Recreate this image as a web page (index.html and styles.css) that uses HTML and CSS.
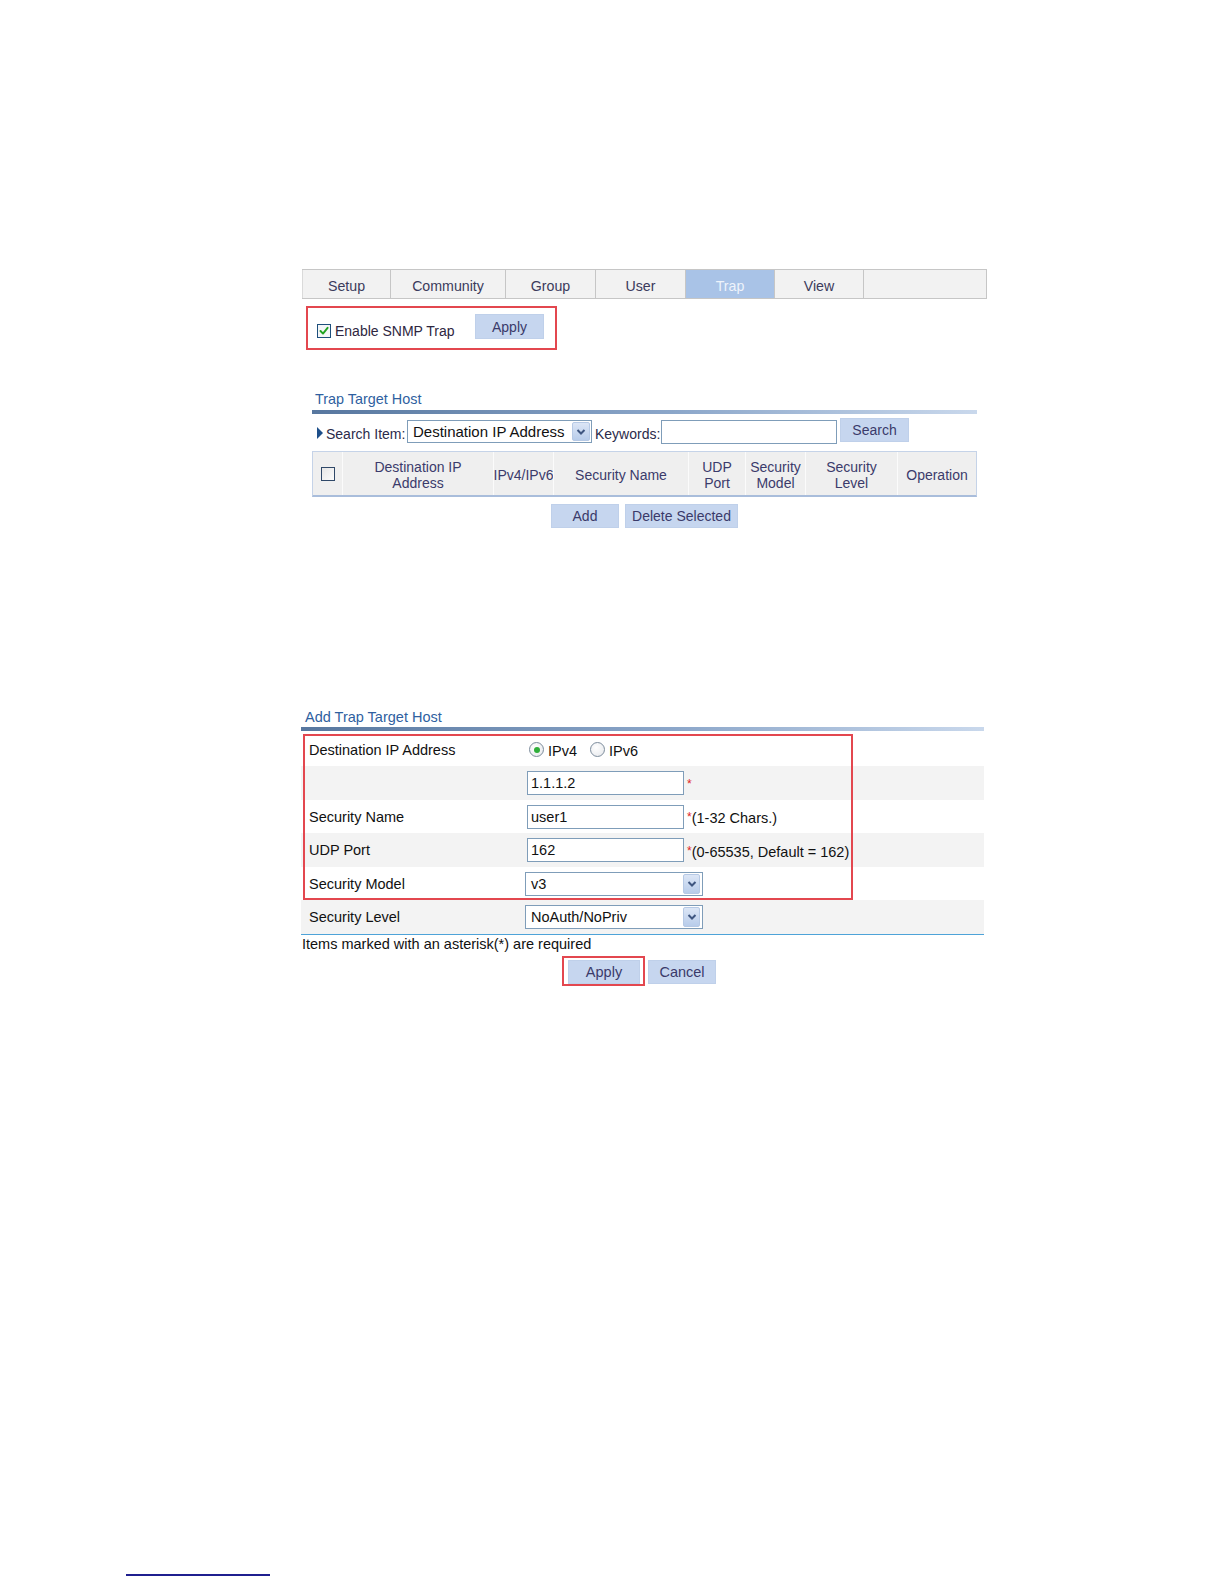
FILE: index.html
```html
<!DOCTYPE html>
<html lang="en">
<head>
<meta charset="utf-8">
<title>SNMP Trap</title>
<link rel="stylesheet" href="styles.css">
</head>
<body>
<div class="content">
  <div class="tabs">
    <div class="tab tab-setup">Setup</div>
    <div class="tab tab-community">Community</div>
    <div class="tab tab-group">Group</div>
    <div class="tab tab-user">User</div>
    <div class="tab tab-trap tab-active">Trap</div>
    <div class="tab tab-view">View</div>
    <div class="tab tab-fill"></div>
  </div>

  <div class="enable-box">
    <span class="cbx cbx-checked">
      <svg width="10" height="10" viewBox="0 0 10 10"><path d="M1.5 5 L4 7.6 L8.6 1.8" fill="none" stroke="#22a322" stroke-width="1.9" stroke-linecap="round" stroke-linejoin="round"/></svg>
    </span>
    <span class="enable-label">Enable SNMP Trap</span>
    <div class="btn btn-apply1">Apply</div>
  </div>

  <section class="host">
    <div class="sec-title">Trap Target Host</div>
    <div class="sec-bar"></div>
    <div class="search-row">
      <span class="tri"></span>
      <span class="search-label">Search Item:</span>
      <div class="select sel-search">
        <span>Destination IP Address</span>
        <span class="select-arrow"><svg width="10" height="8" viewBox="0 0 10 8"><path d="M1.5 2 L5 5.5 L8.5 2" fill="none" stroke="#3f5680" stroke-width="2"/></svg></span>
      </div>
      <span class="kw-label">Keywords:</span>
      <div class="inp inp-kw"></div>
      <div class="btn btn-search">Search</div>
    </div>
    <div class="thead">
      <div class="th th-cb"><span class="cbx cbx-plain"></span></div>
      <div class="th th-dest">Destination IP<br>Address</div>
      <div class="th th-ver">IPv4/IPv6</div>
      <div class="th th-name">Security Name</div>
      <div class="th th-port">UDP<br>Port</div>
      <div class="th th-model">Security<br>Model</div>
      <div class="th th-level">Security<br>Level</div>
      <div class="th th-op">Operation</div>
    </div>
    <div class="btn-row">
      <div class="btn btn-add">Add</div>
      <div class="btn btn-del">Delete Selected</div>
    </div>
  </section>

  <section class="add">
    <div class="sec-title">Add Trap Target Host</div>
    <div class="sec-bar"></div>
    <div class="form">
      <div class="row row-a">
        <div class="label">Destination IP Address</div>
        <div class="value">
          <span class="radio radio-on"><span class="dot"></span></span>
          <span class="radio-text">IPv4</span>
          <span class="radio radio-off"></span>
          <span class="radio-text">IPv6</span>
        </div>
      </div>
      <div class="row row-b row-alt">
        <div class="label"></div>
        <div class="value">
          <div class="inp inp-form">1.1.1.2</div>
          <span class="hint"><span class="star">*</span></span>
        </div>
      </div>
      <div class="row row-a">
        <div class="label">Security Name</div>
        <div class="value">
          <div class="inp inp-form">user1</div>
          <span class="hint"><span class="star">*</span>(1-32 Chars.)</span>
        </div>
      </div>
      <div class="row row-b row-alt">
        <div class="label">UDP Port</div>
        <div class="value">
          <div class="inp inp-form">162</div>
          <span class="hint"><span class="star">*</span>(0-65535, Default = 162)</span>
        </div>
      </div>
      <div class="row row-a">
        <div class="label">Security Model</div>
        <div class="value">
          <div class="select sel-form">
            <span>v3</span>
            <span class="select-arrow"><svg width="10" height="8" viewBox="0 0 10 8"><path d="M1.5 2 L5 5.5 L8.5 2" fill="none" stroke="#3f5680" stroke-width="2"/></svg></span>
          </div>
        </div>
      </div>
      <div class="row row-b row-alt row-last">
        <div class="label">Security Level</div>
        <div class="value">
          <div class="select sel-form">
            <span>NoAuth/NoPriv</span>
            <span class="select-arrow"><svg width="10" height="8" viewBox="0 0 10 8"><path d="M1.5 2 L5 5.5 L8.5 2" fill="none" stroke="#3f5680" stroke-width="2"/></svg></span>
          </div>
        </div>
      </div>
      <div class="hl-box"></div>
    </div>
    <div class="note">Items marked with an asterisk(*) are required</div>
    <div class="actions">
      <div class="hl-btn"><div class="btn btn-apply2">Apply</div></div>
      <div class="btn btn-cancel">Cancel</div>
    </div>
  </section>
</div>
<div class="footer-line"></div>
</body>
</html>
```

FILE: styles.css
```css
body {
  margin: 0;
  background: #ffffff;
  font-family: "Liberation Sans", Arial, sans-serif;
  font-size: 14px;
  color: #111111;
}

.content {
  padding-top: 269px;
  margin-left: 301px;
  width: 690px;
}

/* Tabs */
.tabs {
  display: flex;
  margin-left: 1px;
  width: 685px;
  height: 30px;
  box-sizing: border-box;
  border-top: 1px solid #c6c6c6;
  border-bottom: 1px solid #c6c6c6;
  background: #f2f2f2;
}
.tab {
  box-sizing: border-box;
  border-right: 1px solid #c6c6c6;
  display: flex;
  align-items: center;
  justify-content: center;
  padding-top: 4px;
  color: #3b3b5c;
  font-size: 14.2px;
}
.tab-setup { width: 89px; border-left: 1px solid #dadada; }
.tab-community { width: 115px; }
.tab-group, .tab-user { width: 90px; }
.tab-trap, .tab-view { width: 89px; }
.tab-fill { flex: 1; }
.tab-active { background: #a9c3e7; color: #eef3fb; }

/* Buttons */
.btn {
  box-sizing: border-box;
  height: 24px;
  display: flex;
  align-items: center;
  justify-content: center;
  background: #c6d6ef;
  border: 1px solid #bfd0ea;
  color: #3a3a6a;
}

/* Enable box */
.enable-box {
  margin: 7px 0 0 5px;
  width: 251px;
  height: 44px;
  box-sizing: border-box;
  border: 2px solid #e3474f;
  display: flex;
  align-items: center;
  padding-left: 9px;
  padding-right: 11px;
}
.cbx {
  box-sizing: border-box;
  width: 14px;
  height: 14px;
  display: inline-flex;
  align-items: center;
  justify-content: center;
  flex: none;
}
.cbx-checked {
  border: 1px solid #1d4f7c;
  background: #f4f6f8;
  margin-top: 5px;
}
.cbx-plain {
  border: 1px solid #2f4868;
  background: linear-gradient(135deg, #e6e6e6, #fbfbfb);
}
.enable-label {
  margin-left: 4px;
  margin-top: 6px;
  color: #2e2640;
}
.btn-apply1 {
  margin-left: auto;
  width: 69px;
  height: 25px;
  margin-top: -3px;
}

/* Trap Target Host */
.host {
  margin-left: 11px;
  width: 665px;
}
.sec-title {
  color: #2f5f9f;
  line-height: 16px;
  padding-left: 3px;
  font-size: 14.4px;
}
.host .sec-title { margin-top: 41px; }
.sec-bar {
  height: 4px;
  margin-top: 3px;
  background: linear-gradient(to right, #57779f, #8ca7ca 55%, #c9d8ec);
}
.search-row {
  display: flex;
  align-items: center;
  height: 26px;
  margin-top: 4px;
}
.tri {
  width: 0;
  height: 0;
  border-left: 6px solid #1d4f8a;
  border-top: 6px solid transparent;
  border-bottom: 6px solid transparent;
  margin-left: 5px;
  margin-top: 3px;
  flex: none;
}
.search-label {
  width: 81px;
  margin-left: 3px;
  margin-top: 5px;
  color: #2b2b4b;
  white-space: nowrap;
}
.select {
  box-sizing: border-box;
  border: 1px solid #7f9db9;
  background: #ffffff;
  display: flex;
  align-items: center;
  justify-content: space-between;
  padding-left: 5px;
  padding-right: 1px;
  white-space: nowrap;
  flex: none;
}
.select-arrow {
  box-sizing: border-box;
  width: 18px;
  height: 19px;
  background: linear-gradient(#dce6f6, #b8ccea);
  border: 1px solid #b6c9e5;
  border-radius: 2px;
  display: flex;
  align-items: center;
  justify-content: center;
}
.sel-search {
  width: 185px;
  height: 23px;
  margin-top: 1px;
  font-size: 15px;
}
.kw-label {
  width: 66px;
  margin-left: 3px;
  margin-top: 5px;
  color: #2b2b4b;
}
.inp {
  box-sizing: border-box;
  border: 1px solid #7f9db9;
  background: #ffffff;
  height: 24px;
  display: flex;
  align-items: center;
  padding-left: 3px;
  flex: none;
}
.inp-kw {
  width: 176px;
  margin-top: 2px;
}
.btn-search {
  margin-left: 3px;
  width: 69px;
  align-self: flex-start;
}

/* table header */
.thead {
  display: flex;
  margin-top: 7px;
  height: 46px;
  box-sizing: border-box;
  border: 1px solid #c5d3e8;
  border-bottom: 2px solid #a9bddb;
  background: #efefef;
}
.th {
  box-sizing: border-box;
  display: flex;
  align-items: center;
  justify-content: center;
  text-align: center;
  line-height: 16px;
  padding-top: 3px;
  color: #3b3b6b;
  white-space: nowrap;
  border-left: 1px solid #fbfbfb;
}
.th-cb { width: 29px; border-left: 0; padding-top: 1px; }
.th-dest { width: 151px; }
.th-ver { width: 60px; }
.th-name { width: 135px; }
.th-port { width: 57px; }
.th-model { width: 60px; }
.th-level { width: 92px; }
.th-op { width: 79px; }

.btn-row {
  display: flex;
  justify-content: center;
  gap: 6px;
  margin-top: 7px;
}
.btn-add { width: 68px; }
.btn-del { width: 113px; }

/* Add Trap Target Host */
.add {
  width: 683px;
  font-size: 14.5px;
}
.add .sec-title {
  margin-top: 181px;
  padding-left: 4px;
  font-size: 14.5px;
}
.add .sec-bar {
  margin-top: 2px;
}
.form {
  position: relative;
  margin-top: 2px;
}
.row {
  display: flex;
  align-items: center;
}
.row-a { height: 33px; }
.row-b { height: 34px; }
.row-alt { background: #f3f3f3; }
.row-last {
  border-bottom: 1px solid #4ea3d8;
}
.label {
  box-sizing: border-box;
  width: 224px;
  padding-left: 8px;
  flex: none;
}
.value {
  display: flex;
  align-items: center;
}
.radio {
  box-sizing: border-box;
  width: 15px;
  height: 15px;
  border-radius: 50%;
  border: 1px solid #7c8c9c;
  background: radial-gradient(circle at 40% 35%, #ffffff, #e4e6ea);
  display: inline-flex;
  align-items: center;
  justify-content: center;
  flex: none;
}
.radio-on { margin-left: 4px; }
.radio-off { margin-left: 13px; }
.dot {
  width: 6px;
  height: 6px;
  border-radius: 50%;
  background: #2fae3a;
}
.radio-text {
  margin-left: 4px;
  margin-top: 2px;
}
.inp-form {
  margin-left: 2px;
  width: 157px;
}
.hint {
  margin-left: 3px;
  margin-top: 3px;
  white-space: nowrap;
}
.star {
  color: #e02424;
  font-size: 12px;
  vertical-align: 2px;
}
.sel-form {
  width: 178px;
  height: 24px;
  padding-right: 2px;
}
.sel-form .select-arrow {
  width: 17px;
  height: 20px;
}
.hl-box {
  position: absolute;
  left: 2px;
  top: 1px;
  width: 550px;
  height: 166px;
  box-sizing: border-box;
  border: 2px solid #e3474f;
  pointer-events: none;
}
.note {
  margin-top: 1px;
  margin-left: 1px;
  line-height: 16px;
}
.actions {
  display: flex;
  align-items: flex-start;
  margin-top: 4px;
  margin-left: 261px;
}
.hl-btn {
  border: 2px solid #e3474f;
  padding: 2px 3px 0 4px;
}
.btn-apply2 { width: 72px; }
.btn-cancel {
  width: 68px;
  margin-left: 3px;
  margin-top: 4px;
}

.footer-line {
  margin-left: 126px;
  margin-top: 588px;
  width: 144px;
  height: 2px;
  background: #1f1f8f;
}
```
